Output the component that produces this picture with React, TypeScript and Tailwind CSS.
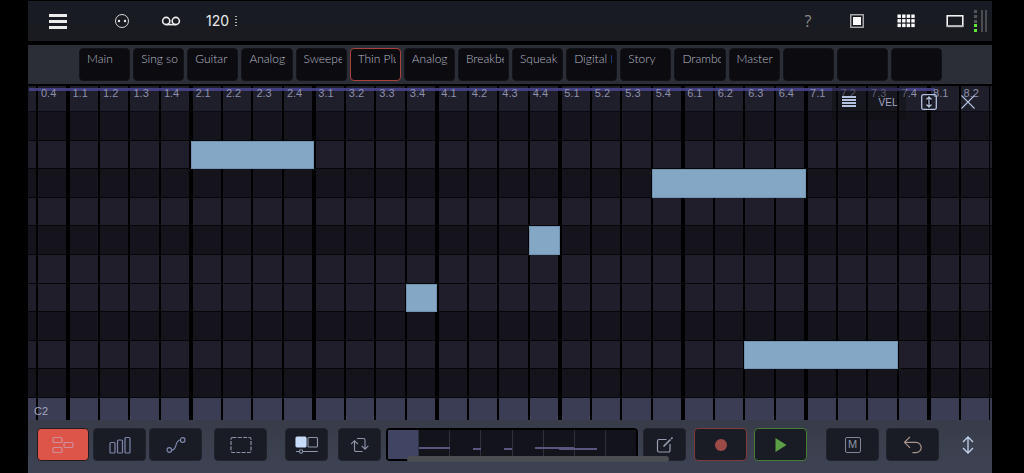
import React from 'react';
import clsx from 'clsx';

interface Note {
  start: number;
  length: number;
  row: number;
}

const BEATS = 31;

const tracks = [
  'Main', 'Sing so', 'Guitar', 'Analog', 'Sweeper', 'Thin Pluck', 'Analog', 'Breakbeat',
  'Squeak', 'Digital Lead', 'Story', 'Drambo', 'Master', '', '', '',
];
const activeTrack = 5;

// true = white key lane, false = black key lane
const lanes = [false, true, false, true, false, true, true, false, true, false];

const notes: Note[] = [
  { start: 5, length: 4, row: 1 },
  { start: 20, length: 5, row: 2 },
  { start: 16, length: 1, row: 4 },
  { start: 12, length: 1, row: 6 },
  { start: 23, length: 5, row: 8 },
];

const beatLabel = (i: number) => `${Math.floor((i + 3) / 4)}.${((i + 3) % 4) + 1}`;
const isBar = (i: number) => (i + 3) % 4 === 0;

interface IconButtonProps {
  label: string;
  className?: string;
  children: React.ReactNode;
}

const IconButton: React.FC<IconButtonProps> = ({ label, className, children }) => (
  <button type="button" aria-label={label} className={clsx('flex shrink-0 items-center justify-center', className)}>
    {children}
  </button>
);

const TopBar: React.FC = () => (
  <header className="flex h-10 items-center bg-linear-to-b from-[#181b24] to-[#1a1b20] pl-[10px] pr-[5px] text-[#ececec]">
    <IconButton label="Menu" className="h-10 w-10">
      <svg width="18" height="16" fill="currentColor">
        <rect y="1" width="18" height="3" />
        <rect y="7" width="18" height="3" />
        <rect y="13" width="18" height="3" />
      </svg>
    </IconButton>
    <IconButton label="MIDI" className="ml-6 h-10 w-10">
      <svg width="16" height="16" fill="none" stroke="currentColor">
        <circle cx="8" cy="8" r="6.5" strokeWidth="0.9" />
        <circle cx="5" cy="8" r="1.2" fill="currentColor" stroke="none" />
        <circle cx="11" cy="8" r="1.2" fill="currentColor" stroke="none" />
      </svg>
    </IconButton>
    <IconButton label="Tape" className="ml-[9px] h-10 w-10">
      <svg width="20" height="12" fill="none" stroke="currentColor" strokeWidth="1.6">
        <circle cx="5.2" cy="6" r="3.6" />
        <circle cx="14.8" cy="6" r="3.6" />
        <path d="M5.2 9.6h9.6" />
      </svg>
    </IconButton>
    <button type="button" className="ml-[15px] flex items-center gap-[6px] font-[Inter,sans-serif] text-sm">
      120
      <svg width="2" height="12" fill="#b5b5b8">
        <rect width="2" height="1" y="1" />
        <rect width="2" height="1" y="4" />
        <rect width="2" height="1" y="7" />
        <rect width="2" height="1" y="10" />
      </svg>
    </button>

    <div className="ml-auto flex items-center">
      <IconButton label="Help" className="h-10 w-10 font-['Open_Sans',sans-serif] text-base text-[#8b8b8e]">
        ?
      </IconButton>
      <IconButton label="Pad view" className="ml-[9px] h-10 w-10">
        <svg width="14" height="14">
          <rect x="0.75" y="0.75" width="12.5" height="12.5" fill="none" stroke="#b9b9bc" strokeWidth="1.3" />
          <rect x="3" y="3" width="8" height="8" fill="#fff" />
        </svg>
      </IconButton>
      <IconButton label="Grid view" className="ml-[9px] h-10 w-10">
        <svg width="18" height="14" fill="#fff">
          {[0, 1, 2].map((r) =>
            [0, 1, 2, 3].map((c) => <rect key={`${r}${c}`} x={0.5 + c * 4.6} y={r * 4.6 + 0.5} width="3.4" height="3.4" />)
          )}
        </svg>
      </IconButton>
      <IconButton label="Fullscreen" className="ml-[11px] h-10 w-9">
        <svg width="18" height="14" fill="none" stroke="#fff" strokeWidth="1.5">
          <rect x="1.2" y="1.8" width="15.6" height="10.4" />
          <path d="M1 12.2h16" stroke="#b9b9bc" strokeWidth="2" />
        </svg>
      </IconButton>
      <svg className="ml-px" width="13" height="24">
        {[1, 6, 11].map((y) => (
          <rect key={y} y={y} width="3" height="3" fill="#55565a" />
        ))}
        <rect y="15" width="3" height="3" fill="#5fe83a" />
        <rect y="20" width="3" height="3" fill="#5fe83a" />
        <rect x="7" y="1" width="2" height="22" fill="#4b4c50" />
        <rect x="11" y="1" width="2" height="22" fill="#4b4c50" />
      </svg>
    </div>
  </header>
);

const TrackStrip: React.FC = () => (
  <nav className="mt-1 flex h-[39px] gap-[3px] bg-[#2b2e37] pr-[50px] pl-[51px] py-[3px]">
    {tracks.map((name, i) => (
      <button
        key={i}
        type="button"
        aria-label={name || 'Empty track'}
        className={clsx(
          'flex min-w-0 flex-1 items-start rounded border bg-[#0b0b10] pt-[2px] pr-1 pl-[7px] text-left',
          i === activeTrack ? 'border-[#a8433b]' : 'border-[#121319]'
        )}
      >
        <span className="w-full overflow-hidden font-[Lato,sans-serif] text-xs leading-4 font-light whitespace-nowrap text-[#b8bac6]">
          {name}
        </span>
      </button>
    ))}
  </nav>
);

const RollTools: React.FC = () => (
  <div className="absolute top-[2px] right-2 z-20 flex h-8 items-center text-[#b4c2e0]">
    <IconButton label="Roll menu" className="h-8 w-[38px] bg-[#0c0c12]/40 pr-1">
      <svg width="14" height="12" fill="currentColor" className="-mt-1">
        <rect width="14" height="2" />
        <rect y="3" width="14" height="2" />
        <rect y="6" width="14" height="2" />
        <rect y="9" width="14" height="2" />
      </svg>
    </IconButton>
    <button type="button" className="h-8 w-9 bg-[#0c0c12]/40 pb-1 font-['Liberation_Sans',sans-serif] text-[10px] text-[#a3aac4]">
      VEL
    </button>
    <IconButton label="Fit height" className="h-8 w-[46px] pb-1">
      <svg width="16" height="16" fill="none" stroke="currentColor" strokeWidth="1.3">
        <rect x="0.7" y="0.7" width="14.6" height="14.6" rx="1.5" />
        <path d="M8 3v10M5.5 5.5L8 3l2.5 2.5M5.5 10.5L8 13l2.5-2.5" />
      </svg>
    </IconButton>
    <IconButton label="Close" className="h-8 w-8 pb-1">
      <svg width="14" height="14" fill="none" stroke="currentColor" strokeWidth="1.1">
        <path d="M0.5 0.5l13 13M13.5 0.5l-13 13" />
      </svg>
    </IconButton>
  </div>
);

const PianoRoll: React.FC = () => (
  <main className="relative mt-[2px] flex flex-1 flex-col font-['Liberation_Sans',sans-serif] text-[11px]">
    <div className="h-[26px] border-b border-[#0b0a10] bg-[#1f1e2b]" />
    {lanes.map((white, i) => (
      <div
        key={i}
        className={clsx('min-h-6 flex-1 border-b border-[#060609]', white ? 'bg-[#1f1e2a]' : 'bg-[#15141c]')}
      />
    ))}
    <div className="relative z-10 flex h-[22px] items-center pt-1 pl-[6px] text-[#a3a7bf]">C2</div>
    <div className="absolute inset-x-0 bottom-0 h-[22px] bg-[#3a3d54]" />

    <div className="absolute inset-0 flex pr-[2px]">
      <div className="w-[9px] border-r border-black" />
      {Array.from({ length: BEATS }, (_, i) => (
        <div
          key={i}
          className={clsx(
            'min-w-0 flex-1 border-black',
            isBar(i) ? 'border-l-2 pl-[2px]' : 'border-l pl-[3px]',
            isBar(i + 1) ? 'border-r-2' : 'border-r'
          )}
        >
          <span className="relative z-10 block leading-[14px] text-[#8d91ac]">{beatLabel(i)}</span>
        </div>
      ))}
      <div className="absolute top-[2px] left-px h-[3px] w-[94%] bg-[#47438a]/90" />
    </div>

    <div className="absolute top-[26px] right-[2px] bottom-[22px] left-[9px]">
      {notes.map((n) => (
        <div
          key={n.start}
          className="absolute border border-[#6f93b0] bg-[#83a7c5]"
          style={{
            left: `${(n.start / BEATS) * 100}%`,
            width: `${(n.length / BEATS) * 100}%`,
            top: `${(n.row / lanes.length) * 100}%`,
            height: `${100 / lanes.length}%`,
          }}
        />
      ))}
    </div>
    <RollTools />
  </main>
);

const Overview: React.FC = () => (
  <div className="relative ml-[5px] flex h-[33px] min-w-0 flex-1 rounded-sm border-2 border-black bg-[#13131b]">
    {Array.from({ length: 8 }, (_, i) => (
      <div key={i} className={clsx('flex-1', i < 7 && 'border-r border-[#30303c]', i === 0 && 'bg-[#424463]')} />
    ))}
    {notes.map((n) => (
      <div
        key={n.start}
        className="absolute h-[2px] bg-[#5b567f]"
        style={{
          left: `${((n.start - 1) / 32) * 100}%`,
          width: `${(n.length / 32) * 100}%`,
          top: n.row > 2 ? '18px' : '17px',
        }}
      />
    ))}
  </div>
);

const dark = 'h-[33px] rounded border border-[#21242d] bg-[#1a1c25]';

const Toolbar: React.FC = () => (
  <footer className="relative flex h-[53px] items-start bg-linear-to-b from-[#383c49] to-[#3e4354] pt-2 pr-[3px] pl-[9px] text-[#7d86ab]">
    <IconButton label="Notes" className="h-[33px] w-[52px] rounded border border-[#241b20] bg-[#dd5548] text-[#d08fa0]">
      <svg width="22" height="18" fill="none" stroke="currentColor" strokeWidth="1.2">
        <rect x="1" y="1.5" width="9" height="5" rx="1.2" />
        <rect x="1" y="11.5" width="9" height="5" rx="1.2" />
        <rect x="12" y="6.5" width="9" height="5" rx="1.2" />
      </svg>
    </IconButton>
    <IconButton label="Velocity" className={clsx(dark, 'ml-1 w-[53px]')}>
      <svg width="22" height="18" fill="none" stroke="currentColor" strokeWidth="1.2">
        <rect x="1" y="6.5" width="5" height="10.5" rx="1" />
        <rect x="8.5" y="4" width="5" height="13" rx="1" />
        <rect x="16" y="1.5" width="5" height="15.5" rx="1" />
      </svg>
    </IconButton>
    <IconButton label="Automation" className={clsx(dark, 'ml-[3px] w-[53px]')}>
      <svg width="20" height="18" fill="none" stroke="currentColor" strokeWidth="1.2">
        <circle cx="3.3" cy="14" r="2.3" />
        <circle cx="16.7" cy="4" r="2.3" />
        <path d="M5.6 14.2c6 0 2.8-10.2 8.8-10.2" />
      </svg>
    </IconButton>
    <IconButton label="Select" className={clsx(dark, 'ml-3 w-[53px]')}>
      <svg width="22" height="18" fill="none" stroke="#8a90a5" strokeWidth="1.2">
        <rect x="1" y="1.5" width="20" height="15" rx="1.5" strokeDasharray="4 1.3" />
      </svg>
    </IconButton>
    <IconButton label="Snap" className={clsx(dark, 'ml-[18px] w-[43px]')}>
      <svg width="24" height="18" fill="none" stroke="#8f98ab" strokeWidth="1.1">
        <rect x="1" y="1" width="10" height="10" rx="1" fill="#c9dcfa" stroke="#c9dcfa" />
        <rect x="13" y="1.5" width="9.5" height="9.5" rx="1" />
        <path d="M1 15.5h3.2M7.8 15.5h15" />
        <circle cx="6" cy="15.5" r="1.7" />
      </svg>
    </IconButton>
    <IconButton label="Loop" className={clsx(dark, 'ml-[10px] w-[43px]')}>
      <svg width="20" height="18" fill="none" stroke="#8f97ab" strokeWidth="1.1">
        <path d="M7 2.5h6.5a1.5 1.5 0 0 1 1.5 1.5v9M11.7 9.8l3.3 3.3 3.3-3.3" />
        <path d="M12.5 15.5H6a1.5 1.5 0 0 1-1.5-1.5V4.7M1.2 8l3.3-3.3L7.8 8" />
      </svg>
    </IconButton>
    <Overview />
    <IconButton label="Edit" className={clsx(dark, 'ml-[5px] w-[43px]')}>
      <svg width="18" height="18" fill="none" stroke="#979db0" strokeWidth="1.2">
        <path d="M10.5 3.5h-7.5a1.5 1.5 0 0 0-1.5 1.5v9.5a1.5 1.5 0 0 0 1.5 1.5h9.5a1.5 1.5 0 0 0 1.5-1.5v-6.5" />
        <path d="M7.5 10.5l7-7M15.2 2.8l1.3-1.3" strokeWidth="1.7" />
      </svg>
    </IconButton>
    <IconButton label="Record" className="ml-2 h-[33px] w-[53px] rounded border border-[#813a37] bg-[#1a1c25]">
      <svg width="14" height="14">
        <circle cx="7" cy="7" r="6" fill="#9b4a47" />
      </svg>
    </IconButton>
    <IconButton label="Play" className="ml-[7px] h-[33px] w-[53px] rounded border border-[#457d35] bg-[#1a1c25]">
      <svg width="12" height="14">
        <path d="M0.5 0l11 7-11 7z" fill="#5c9f45" />
      </svg>
    </IconButton>
    <IconButton label="Mute" className={clsx(dark, 'ml-[19px] w-[53px]')}>
      <span className="flex h-4 w-4 items-center justify-center rounded-xs border border-[#7f8799] font-['Liberation_Sans',sans-serif] text-[11px] leading-none text-[#8b92a5]">
        M
      </span>
    </IconButton>
    <IconButton label="Undo" className={clsx(dark, 'ml-[7px] w-[53px]')}>
      <svg width="20" height="18" fill="none" stroke="#a8958c" strokeWidth="1.2">
        <path d="M7 .8L1.5 6.3l5.5 5.5M1.5 6.3h11.5a5.2 5.2 0 0 1 0 10.4h-3.5" />
      </svg>
    </IconButton>
    <IconButton label="Resize" className="ml-[7px] h-[33px] w-[43px] text-[#c4d3ee]">
      <svg width="14" height="18" fill="none" stroke="currentColor" strokeWidth="1.3">
        <path d="M7 1v16M2 6l5-5 5 5M2 12l5 5 5-5" />
      </svg>
    </IconButton>
    <div className="absolute bottom-[11px] left-[39.3%] h-[6px] w-[27.2%] rounded-full bg-[#4c4d53]" />
  </footer>
);

const App: React.FC = () => {
  return (
    <div className="min-h-screen bg-black pr-8 pl-7">
      <div className="flex min-h-screen flex-col pt-px">
        <TopBar />
        <TrackStrip />
        <PianoRoll />
        <Toolbar />
      </div>
    </div>
  );
};

export default App;
